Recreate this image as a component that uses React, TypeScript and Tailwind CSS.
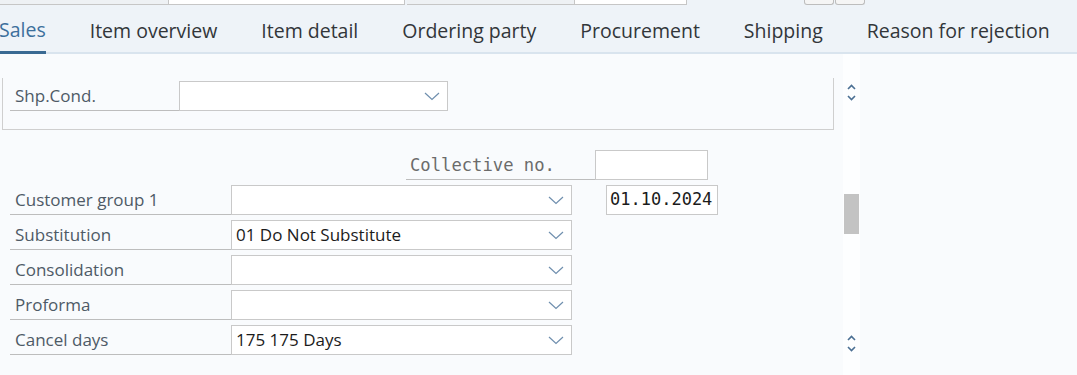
import React from "react";

const tabs = ["Sales", "Item overview", "Item detail", "Ordering party", "Procurement", "Shipping", "Reason for rejection"];

function Chevron() {
  return (
    <svg width="16" height="9" viewBox="0 0 16 9" className="shrink-0">
      <path d="M1 1 L8 7.5 L15 1" fill="none" stroke="#6f8fae" strokeWidth="1.2" />
    </svg>
  );
}

function Select({ value, width }: { value?: string; width: string }) {
  return (
    <div className={`flex h-[30px] ${width} items-center justify-between border border-[#c9c9c9] bg-white pl-[4px] pr-[7px] text-[17px] text-[#1b1b1b]`}>
      <span>{value}</span>
      <Chevron />
    </div>
  );
}

function Arrows() {
  return (
    <div className="flex flex-col items-center gap-[5px]">
      <svg width="9" height="6" viewBox="0 0 9 6">
        <path d="M1 5 L4.5 1.5 L8 5" fill="none" stroke="#4b6f93" strokeWidth="1.6" />
      </svg>
      <svg width="9" height="6" viewBox="0 0 9 6">
        <path d="M1 1 L4.5 4.5 L8 1" fill="none" stroke="#4b6f93" strokeWidth="1.6" />
      </svg>
    </div>
  );
}

const rows = [
  { label: "Customer group 1", value: "" },
  { label: "Substitution", value: "01 Do Not Substitute" },
  { label: "Consolidation", value: "" },
  { label: "Proforma", value: "" },
  { label: "Cancel days", value: "175 175 Days" },
];

export default function App() {
  return (
    <div className="h-[375px] w-[1077px] overflow-hidden bg-[#f9fbfd] font-['Open_Sans',sans-serif]">
      {/* cut-off fields above the tabs */}
      <div className="flex h-[5px] bg-[#eef3f8]">
        <div className="h-[5px] w-[169px] border-b border-r border-[#c6c6c6] bg-[#eef1f4]" />
        <div className="h-[5px] w-[236px] border-b border-r border-[#c6c6c6] bg-white" />
        <div className="ml-[2px] h-[5px] w-[168px] border-b border-r border-[#c6c6c6] bg-[#eef1f4]" />
        <div className="h-[5px] w-[112px] border-b border-r border-[#c6c6c6] bg-white" />
        <div className="ml-[117px] h-[5px] w-[30px] rounded-b-[3px] border-b border-l border-r border-[#bdbdbd] bg-[#f5f5f5]" />
        <div className="ml-[1px] h-[5px] w-[30px] rounded-b-[3px] border-b border-l border-r border-[#bdbdbd] bg-[#f5f5f5]" />
      </div>

      {/* tab strip */}
      <div className="flex h-[49px] items-stretch border-b-2 border-[#d9e4ee] bg-[#eef3f8]">
        {tabs.map((t, i) => (
          <div
            key={t}
            className={`-mb-[2px] flex items-center text-[19.5px] ${
              i === 0
                ? "-ml-[1px] mr-[22px] border-b-[3px] border-[#3a6a93] text-[#3c6f9c]"
                : "px-[22px] text-[#32363a]"
            }`}
          >
            <span className="pt-[3px]">{t}</span>
          </div>
        ))}
      </div>

      <div className="flex">
        <div className="w-[843px]">
          {/* group box, top scrolled away */}
          <div className="ml-[2px] mt-[24px] w-[832px] border-b border-l border-r border-[#cfcfcf] pb-[18px] pl-[7px] pt-[3px]">
            <div className="flex">
              <div className="flex h-[30px] w-[169px] items-center border-b border-[#bdbdbd] pl-[5px] text-[17px] text-[#4e5a66]">
                Shp.Cond.
              </div>
              <Select width="w-[269px]" />
            </div>
          </div>

          <div className="ml-[406px] mt-[20px] flex">
            <div className="flex h-[30px] w-[189px] items-center border-b border-[#bdbdbd] pl-[4px] pt-[3px] font-['DejaVu_Sans_Mono',monospace] text-[17.2px] text-[#6b6b6b]">
              Collective no.
            </div>
            <div className="h-[30px] w-[113px] border border-[#c9c9c9] bg-white" />
          </div>

          <div className="ml-[10px] mt-[5px] flex flex-col gap-[5px]">
            {rows.map((r, i) => (
              <div key={r.label} className="flex">
                <div className="flex h-[30px] w-[221px] items-center border-b border-[#bdbdbd] pl-[5px] text-[17px] text-[#4e5a66]">
                  {r.label}
                </div>
                <Select width="w-[341px]" value={r.value} />
                {i === 0 && (
                  <div className="ml-[34px] flex h-[30px] w-[112px] items-center border border-[#c9c9c9] bg-white pl-[3px] font-['DejaVu_Sans_Mono',monospace] text-[17px] text-[#1b1b1b]">
                    01.10.2024
                  </div>
                )}
              </div>
            ))}
          </div>
        </div>

        {/* vertical scrollbar */}
        <div className="flex h-[321px] w-[17px] flex-col items-center bg-[#fdfeff] pt-[30px]">
          <Arrows />
          <div className="mt-[93px] h-[40px] w-[15px] bg-[#c3c3c3]" />
          <div className="mt-[101px]">
            <Arrows />
          </div>
        </div>
      </div>
    </div>
  );
}
